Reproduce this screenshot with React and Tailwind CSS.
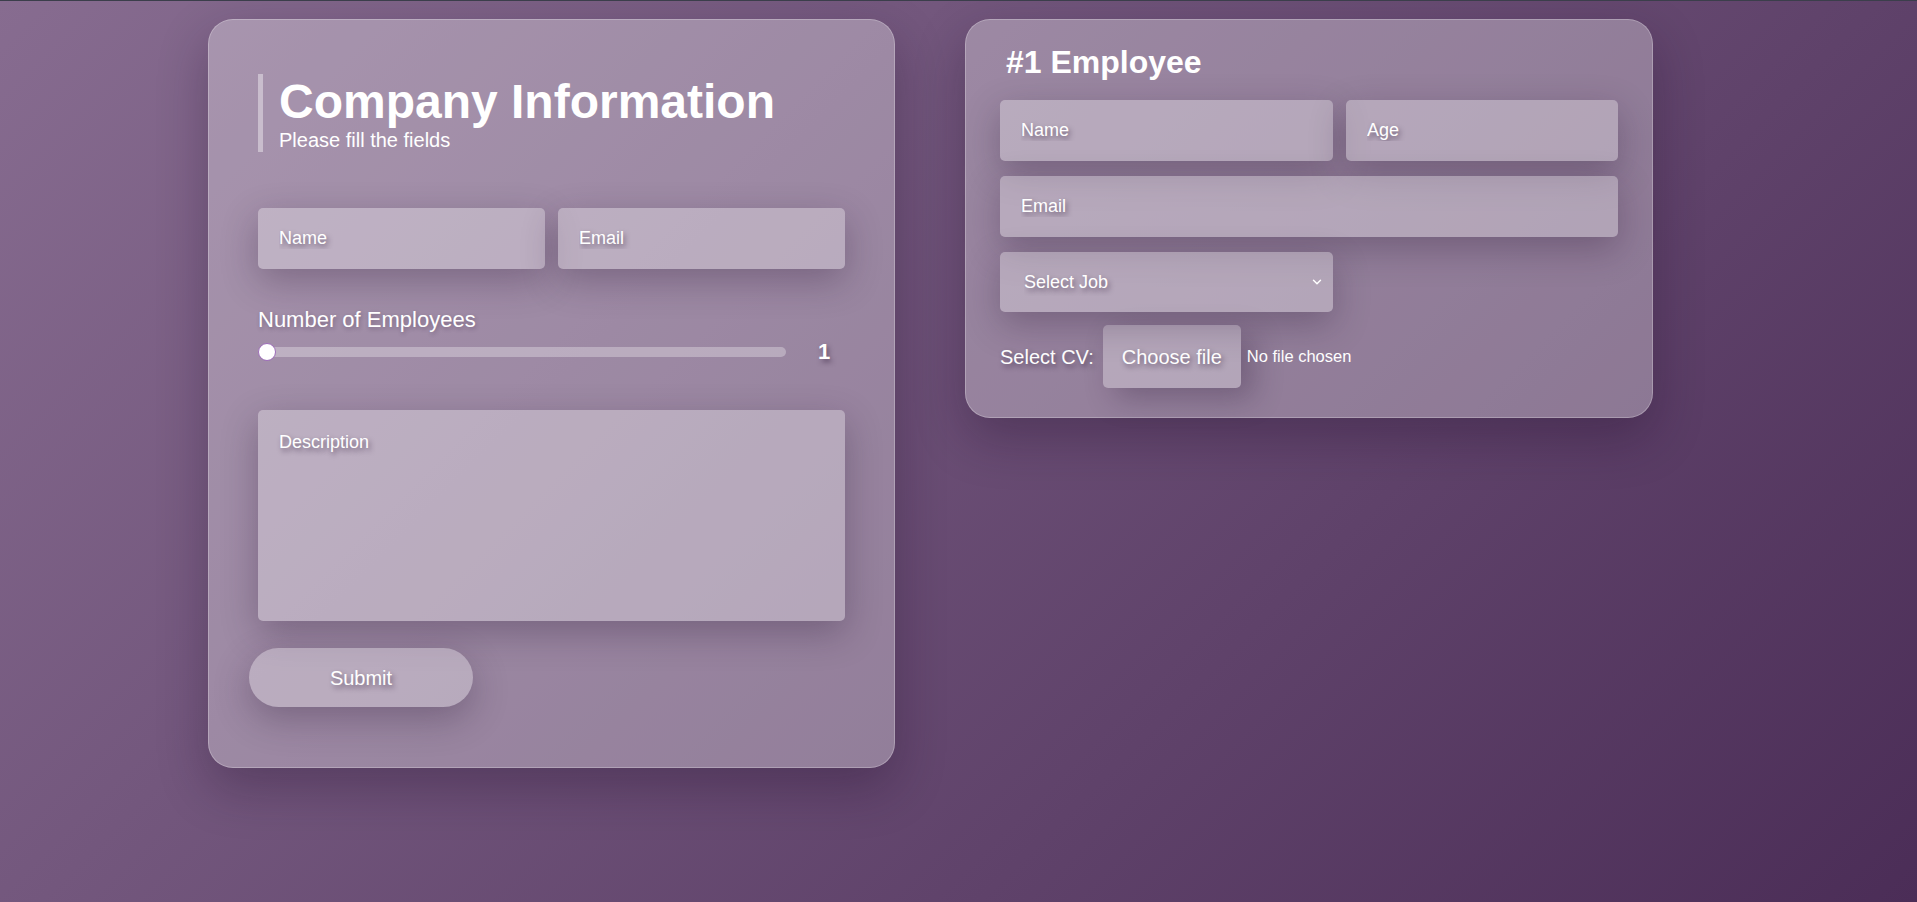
import React from "react";
import { ChevronDown } from "lucide-react";

const shadowText = "[text-shadow:2px_3px_5px_rgba(40,20,50,0.5)]";
const field =
  "w-full rounded-[5px] bg-white/30 text-[18px] text-white placeholder:text-white outline-none shadow-[0_12px_36px_rgba(40,20,50,0.3)] " +
  shadowText;

function CompanyCard() {
  return (
    <div className="w-[687px] h-[749px] shrink-0 rounded-[25px] border border-white/25 bg-white/30 px-[49px] pt-[54px] text-white shadow-[0_20px_50px_rgba(30,10,40,0.3)]">
      <div className="border-l-[5px] border-white/40 pl-[16px]">
        <h1 className="text-[48px] font-bold leading-[55px]">Company Information</h1>
        <p className="text-[20px] leading-[23px]">Please fill the fields</p>
      </div>

      <div className="mt-[56px] grid grid-cols-2 gap-[13px]">
        <input className={field + " h-[61px] px-[21px]"} placeholder="Name" />
        <input className={field + " h-[61px] px-[21px]"} placeholder="Email" />
      </div>

      <div className="mt-[38px] text-[22px] leading-[25px] [text-shadow:1px_2px_4px_rgba(40,20,50,0.3)]">
        Number of Employees
      </div>
      <div className="mt-[10px] flex h-[19px] items-center">
        {/* slider: track + thumb at min value */}
        <div className="relative h-[10px] w-[528px] rounded-full bg-white/30">
          <div className="absolute -top-[4px] left-0 h-[18px] w-[18px] rounded-full border-[1.5px] border-[#9c6bb8] bg-white" />
        </div>
        <span className={"ml-[32px] text-[22px] font-bold leading-none " + shadowText}>1</span>
      </div>

      <textarea
        className={field + " mt-[49px] block h-[211px] resize-none px-[21px] py-[19px]"}
        placeholder="Description"
      />

      <button
        className={
          "-ml-[9px] mt-[27px] h-[59px] w-[224px] rounded-full bg-white/30 text-[20px] text-white shadow-[0_12px_36px_rgba(40,20,50,0.3)] " +
          shadowText
        }
      >
        Submit
      </button>
    </div>
  );
}

function EmployeeCard() {
  return (
    <div className="w-[688px] h-[399px] shrink-0 rounded-[25px] border border-white/25 bg-white/30 px-[34px] pt-[24px] text-white shadow-[0_20px_50px_rgba(30,10,40,0.3)]">
      <h2 className="ml-[6px] text-[32px] font-bold leading-[37px]">#1 Employee</h2>

      <div className="mt-[19px] grid grid-cols-[333px_1fr] gap-x-[13px] gap-y-[15px]">
        <input className={field + " h-[61px] px-[21px]"} placeholder="Name" />
        <input className={field + " h-[61px] px-[21px]"} placeholder="Age" />
        <input className={field + " col-span-2 h-[61px] px-[21px]"} placeholder="Email" />
        <div className="relative">
          <select
            defaultValue=""
            className={field + " h-[60px] appearance-none pl-[24px] pr-[40px]"}
          >
            <option value="" className="text-black">Select Job</option>
            <option className="text-black">Developer</option>
            <option className="text-black">Designer</option>
            <option className="text-black">Manager</option>
          </select>
          <ChevronDown
            size={14}
            strokeWidth={2.5}
            className="pointer-events-none absolute right-[9px] top-[23px] text-white"
          />
        </div>
      </div>

      <div className="mt-[13px] flex h-[63px] items-center">
        <span className={"text-[20px] " + shadowText}>Select CV:</span>
        <label className="ml-[9px] flex h-full cursor-pointer items-center">
          <input type="file" className="hidden" />
          <span
            className={
              "flex h-full items-center rounded-[5px] bg-white/30 px-[19px] text-[20px] shadow-[12px_10px_30px_rgba(40,20,50,0.3)] " +
              shadowText
            }
          >
            Choose file
          </span>
          <span className="ml-[6px] text-[16.5px]">No file chosen</span>
        </label>
      </div>
    </div>
  );
}

export default function App() {
  return (
    <div
      className="flex h-[902px] w-full items-start gap-[70px] overflow-hidden border-t border-[#3b3e4b] bg-[linear-gradient(135deg,#876c90,#4b2d57)] pl-[208px] pt-[18px]"
      style={{ fontFamily: '"Liberation Sans", Arial, sans-serif' }}
    >
      <CompanyCard />
      <EmployeeCard />
    </div>
  );
}
